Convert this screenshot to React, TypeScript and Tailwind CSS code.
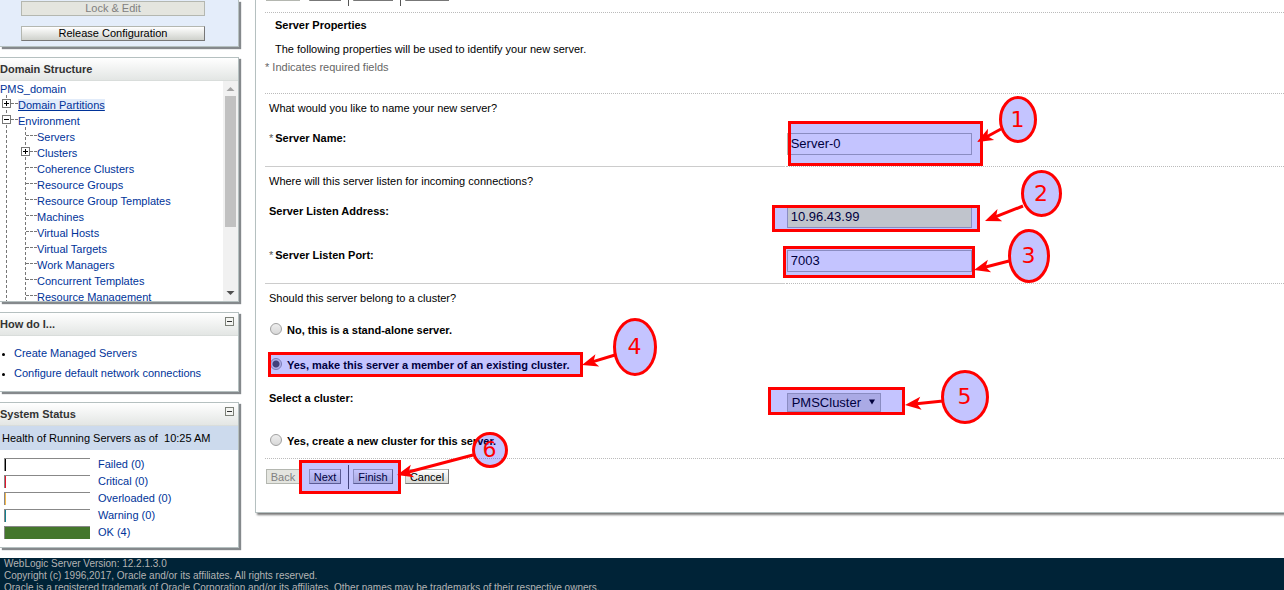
import type { ReactNode } from 'react';

const LINK = 'text-[#003399] hover:underline';

const treeItems = [
  'Coherence Clusters',
  'Resource Groups',
  'Resource Group Templates',
  'Machines',
  'Virtual Hosts',
  'Virtual Targets',
  'Work Managers',
  'Concurrent Templates',
  'Resource Management',
];

const health = [
  { label: 'Failed (0)', tick: 'bg-black' },
  { label: 'Critical (0)', tick: 'bg-[#e0142c]' },
  { label: 'Overloaded (0)', tick: 'bg-[#f5b94a]' },
  { label: 'Warning (0)', tick: 'bg-[#128090]' },
];

function Panel({ title, collapsible, children }: { title: string; collapsible?: boolean; children: ReactNode }) {
  return (
    <section className="border-y border-r border-[#b5c0c0] bg-white shadow-[2px_2px_1px_#85898c]">
      <header className="flex h-[23px] items-center justify-between border-b border-[#d9dddb] bg-linear-to-b from-white to-[#e3e6e4] pr-1">
        <h2 className="font-bold text-[#333]">{title}</h2>
        {collapsible && (
          <button type="button" aria-label={`Collapse ${title}`} className="mb-1.5 size-[9px]">
            <svg viewBox="0 0 9 9" className="block size-[9px]" shapeRendering="crispEdges">
              <rect x="0.5" y="0.5" width="8" height="8" fill="#f4f5f2" stroke="#7c8078" />
              <path d="M2 4.5h5" stroke="#333" />
            </svg>
          </button>
        )}
      </header>
      {children}
    </section>
  );
}

function Toggle({ label, open }: { label: string; open?: boolean }) {
  return (
    <button type="button" aria-label={label} className="mb-[3px] size-[9px] shrink-0">
      <svg viewBox="0 0 9 9" className="block size-[9px]" shapeRendering="crispEdges">
        <rect x="0.5" y="0.5" width="8" height="8" fill="#fff" stroke="#777" />
        <path d={open ? 'M2 4.5h5' : 'M2 4.5h5M4.5 2v5'} stroke="#000" />
      </svg>
    </button>
  );
}

function DomainTree() {
  return (
    <div className="flex h-[220px]">
      <div className="relative flex-1 overflow-hidden">
        <svg className="absolute top-0 left-0 h-[220px] w-10" shapeRendering="crispEdges" fill="none" stroke="#777">
          <path d="M6.5 14v206M25.5 46v174" strokeDasharray="3 2" />
          <path
            d="M11 22.5h7M11 38.5h7M30 70.5h7M26 54.5h11M26 86.5h11M26 102.5h11M26 118.5h11M26 134.5h11M26 150.5h11M26 166.5h11M26 182.5h11M26 198.5h11M26 214.5h11"
            strokeDasharray="3 1"
          />
        </svg>
        <ul className="relative leading-4 whitespace-nowrap">
          <li className="h-4"><a href="#domain" className={LINK}>PMS_domain</a></li>
          <li className="flex h-4 items-center gap-[7px] pl-0.5">
            <Toggle label="Expand Domain Partitions" />
            <a href="#partitions" className="bg-[#e2ecfa] leading-3 text-[#003399] underline">Domain Partitions</a>
          </li>
          <li className="flex h-4 items-center gap-[7px] pl-0.5">
            <Toggle label="Collapse Environment" open />
            <a href="#environment" className={LINK}>Environment</a>
          </li>
          <li className="h-4 pl-[37px]"><a href="#servers" className={LINK}>Servers</a></li>
          <li className="flex h-4 items-center gap-[7px] pl-[21px]">
            <Toggle label="Expand Clusters" />
            <a href="#clusters" className={LINK}>Clusters</a>
          </li>
          {treeItems.map((item) => (
            <li key={item} className="h-4 pl-[37px]"><a href="#tree" className={LINK}>{item}</a></li>
          ))}
        </ul>
      </div>
      <div className="flex w-[15px] flex-col items-center bg-[#f1f1f1]">
        <svg viewBox="0 0 15 15" className="size-[15px]"><path d="M3.500 10L7.500 6L11.500 10Z" fill="#a3a3a3" /></svg>
        <div className="h-[131px] w-[11px] bg-[#c1c1c1]" />
        <svg viewBox="0 0 15 15" className="mt-auto size-[15px]"><path d="M3.500 5L7.500 9L11.500 5Z" fill="#505050" /></svg>
      </div>
    </div>
  );
}

function Sidebar() {
  return (
    <aside className="flex w-[239px] shrink-0 flex-col gap-2.5">
      <div className="flex h-[47px] flex-col items-start justify-end gap-2.5 border-r border-b border-[#b5c0c0] bg-[#e4edfa] pb-[5px] pl-[21px] shadow-[2px_2px_1px_#85898c]">
        <button type="button" disabled className="h-[15px] w-[184px] shrink-0 border border-[#b4b7b0] bg-[#e4e5df] pb-0.5 leading-3 text-[#808080]">
          Lock &amp; Edit
        </button>
        <button type="button" className="h-[15px] w-[184px] shrink-0 border border-[#b4b7b0] border-r-[#777] border-b-[#777] bg-linear-to-b from-white to-[#cfd1cc] pb-0.5 leading-3">
          Release Configuration
        </button>
      </div>

      <Panel title="Domain Structure"><DomainTree /></Panel>

      <Panel title="How do I..." collapsible>
        <ul className="h-[55px] list-disc pt-[7px] pl-3.5 leading-5 marker:text-[9px]">
          <li><a href="#create" className={LINK}>Create Managed Servers</a></li>
          <li><a href="#configure" className={LINK}>Configure default network connections</a></li>
        </ul>
      </Panel>

      <Panel title="System Status" collapsible>
        <p className="h-6 bg-[#ccdaed] pl-0.5 leading-6 whitespace-pre">Health of Running Servers as of  10:25 AM</p>
        <ul className="pt-2 pb-1">
          {health.map(({ label, tick }) => (
            <li key={label} className="flex h-[17px] items-start gap-2 pl-1">
              <span className="flex h-[13px] w-[86px] border-t border-l border-[#888]"><span className={`w-px ${tick}`} /></span>
              <a href="#health" className={`${LINK} leading-[13px]`}>{label}</a>
            </li>
          ))}
          <li className="flex h-[17px] items-start gap-2 pl-1">
            <span className="h-[13px] w-[86px] border-t border-l border-[#888] bg-[#44772c]" />
            <a href="#health" className={`${LINK} leading-[13px]`}>OK (4)</a>
          </li>
        </ul>
      </Panel>
    </aside>
  );
}

const WIZARD_BUTTON =
  'h-[15px] border border-[#b4b7b0] border-r-[#777] border-b-[#777] bg-linear-to-b from-white to-[#d8dad4] text-center leading-3 whitespace-nowrap';

function WizardBar() {
  return (
    <div className="flex h-6 shrink-0 items-start pl-px">
      <button type="button" disabled className="mt-1 h-[15px] w-[34px] border border-[#b4b7b0] bg-[#e4e5df] leading-3 text-[#808080]">Back</button>
      <button type="button" className={`mt-1 ml-[9px] w-8 ${WIZARD_BUTTON}`}>Next</button>
      <span className="mr-1 ml-[7px] h-6 w-px bg-[#555]" />
      <button type="button" className={`mt-1 w-10 ${WIZARD_BUTTON}`}>Finish</button>
      <span className="mr-1 ml-[7px] h-6 w-px bg-[#555]" />
      <button type="button" className={`mt-1 w-11 ${WIZARD_BUTTON}`}>Cancel</button>
    </div>
  );
}

function Field({ id, label, value, required, last, filled }: { id: string; label: string; value: string; required?: boolean; last?: boolean; filled?: boolean }) {
  return (
    <div className={last ? 'flex h-[37px] gap-px' : 'flex h-11 gap-px'}>
      <div className={last ? 'w-[51%] border-b border-[#ccc] pl-1' : 'w-[51%] pl-1'}>
        {required && <span className="mr-0.5 text-[#555]">*</span>}
        <label htmlFor={id} className="font-bold">{label}</label>
      </div>
      <div className={last ? 'flex-1 border-b border-dotted border-[#bbb] pt-[3px] pl-px' : 'flex-1 pt-[3px] pl-px'}>
        <input
          id={id}
          defaultValue={value}
          className={`block h-[22px] w-[185px] border border-[#b4b7b0] pb-0.5 pl-[3px] text-[13px] ${filled ? 'bg-[#faffbd]' : 'bg-white'}`}
        />
      </div>
    </div>
  );
}

function Choice({ id, label, checked }: { id: string; label: string; checked?: boolean }) {
  return (
    <div className="flex h-4 gap-[5px] pl-[5px]">
      <input
        type="radio"
        name="cluster-choice"
        id={id}
        defaultChecked={checked}
        className="mt-px size-3 appearance-none rounded-full border border-[#a0a0a0] bg-linear-to-b from-[#eee] to-[#d8d8d8] checked:bg-[radial-gradient(circle,#555_3px,#e4e4e4_4px)]"
      />
      <label htmlFor={id} className="font-bold">{label}</label>
    </div>
  );
}

function Wizard() {
  return (
    <main className="min-w-0 flex-1 border-b border-l border-[#b5c0c0] pl-[9px] leading-4 shadow-[2px_2px_2px_#777]">
      <div className="flex h-3 flex-col justify-end overflow-hidden pb-1.5"><WizardBar /></div>

      <section className="border-y border-dotted border-[#bbb] pt-1 pb-[18px]">
        <h1 className="pl-2.5 font-bold">Server Properties</h1>
        <p className="mt-2 pl-2.5">The following properties will be used to identify your new server.</p>
        <p className="mt-0.5 text-[#666]">* Indicates required fields</p>
      </section>

      <section className="pt-1.5">
        <p className="mb-3.5 pl-1">What would you like to name your new server?</p>
        <Field id="server-name" label="Server Name:" value="Server-0" required last />
      </section>

      <section className="pt-1.5">
        <p className="mb-3.5 pl-1">Where will this server listen for incoming connections?</p>
        <Field id="listen-address" label="Server Listen Address:" value="10.96.43.99" filled />
        <Field id="listen-port" label="Server Listen Port:" value="7003" required last />
      </section>

      <section className="border-b border-dotted border-[#bbb] pt-1.5 pb-[9px]">
        <p className="mb-4 pl-1">Should this server belong to a cluster?</p>
        <Choice id="standalone" label="No, this is a stand-alone server." />
        <div className="mt-[19px] mb-[17px]">
          <Choice id="existing" label="Yes, make this server a member of an existing cluster." checked />
        </div>
        <div className="flex h-[43px] gap-px">
          <div className="w-[51%] pl-1"><label htmlFor="cluster" className="font-bold">Select a cluster:</label></div>
          <div className="flex-1 pt-[3px] pl-px">
            <div className="relative w-[94px]">
              <select id="cluster" className="block h-[19px] w-full appearance-none border border-[#b4b7b0] bg-[#ddd] pl-1 text-[13px] leading-4">
                <option>PMSCluster</option>
              </select>
              <svg viewBox="0 0 7 7" className="pointer-events-none absolute top-1.5 right-1.5 size-[6px]"><path d="M0 0.500H7L3.500 6.500Z" /></svg>
            </div>
          </div>
        </div>
        <Choice id="new-cluster" label="Yes, create a new cluster for this server." />
      </section>

      <div className="pt-1.5 pb-[23px]"><WizardBar /></div>
    </main>
  );
}

const boxes = [
  [789.5, 122.5, 192, 42],
  [773.5, 206.5, 205, 24],
  [784.5, 247.5, 189, 29],
  [269.5, 353.5, 312, 22],
  [769.5, 388.5, 134, 25],
  [300.5, 461.5, 99, 31],
];

const callouts = [
  { cx: 1018, cy: 119.5, rx: 17.5, ry: 22, from: [1001, 129], tip: [977, 142] },
  { cx: 1041.5, cy: 193.5, rx: 19, ry: 22, from: [1023, 206], tip: [985, 221] },
  { cx: 1029, cy: 256, rx: 19.5, ry: 25.5, from: [1009, 261], tip: [974, 270] },
  { cx: 635, cy: 347, rx: 20.5, ry: 27.5, from: [615, 355], tip: [582, 365] },
  { cx: 965, cy: 397, rx: 22.5, ry: 25.5, from: [943, 401], tip: [905, 405] },
  { cx: 490, cy: 450, rx: 16.5, ry: 16.5, from: [473, 455], tip: [397, 475] },
];

function Annotations() {
  return (
    <svg width="1284" height="590" className="pointer-events-none absolute top-0 left-0">
      <g fill="#0000ff" fillOpacity="0.23" stroke="#ff0000" strokeWidth="3">
        {boxes.map(([x, y, width, height]) => (
          <rect key={y} x={x} y={y} width={width} height={height} />
        ))}
      </g>
      {callouts.map(({ cx, cy, rx, ry, from, tip }, i) => {
        const dx = tip[0] - from[0];
        const dy = tip[1] - from[1];
        const length = Math.hypot(dx, dy);
        const angle = (Math.atan2(dy, dx) * 180) / Math.PI;
        return (
          <g key={cx}>
            <ellipse cx={cx} cy={cy} rx={rx} ry={ry} fill="#0000ff" fillOpacity="0.23" stroke="#ff0000" strokeWidth="3" />
            <g transform={`translate(${tip[0]} ${tip[1]}) rotate(${angle})`}>
              <path d={`M${-length} 0H-9`} stroke="#ff0000" strokeWidth="3" />
              <path d="M0 0L-16 -6.500L-12 0L-16 6.500Z" fill="#ff0000" />
            </g>
            <text x={cx - 0.5} y={cy + 7} textAnchor="middle" fill="#ff0000" fontFamily="DejaVu Sans, sans-serif" fontSize="22">{i + 1}</text>
          </g>
        );
      })}
    </svg>
  );
}

export default function App() {
  return (
    <div className="relative flex h-screen flex-col overflow-hidden bg-white font-['Liberation_Sans',Arial,sans-serif] text-[11px] text-black">
      <div className="flex shrink-0 items-start gap-4 pb-2.5">
        <Sidebar />
        <Wizard />
      </div>
      <footer className="shrink-0 bg-[#002337] pl-1 text-[10px] leading-3 whitespace-nowrap text-[#b4b4b4]">
        <p>WebLogic Server Version: 12.2.1.3.0</p>
        <p>Copyright (c) 1996,2017, Oracle and/or its affiliates. All rights reserved.</p>
        <p>Oracle is a registered trademark of Oracle Corporation and/or its affiliates. Other names may be trademarks of their respective owners.</p>
      </footer>
      <Annotations />
    </div>
  );
}
